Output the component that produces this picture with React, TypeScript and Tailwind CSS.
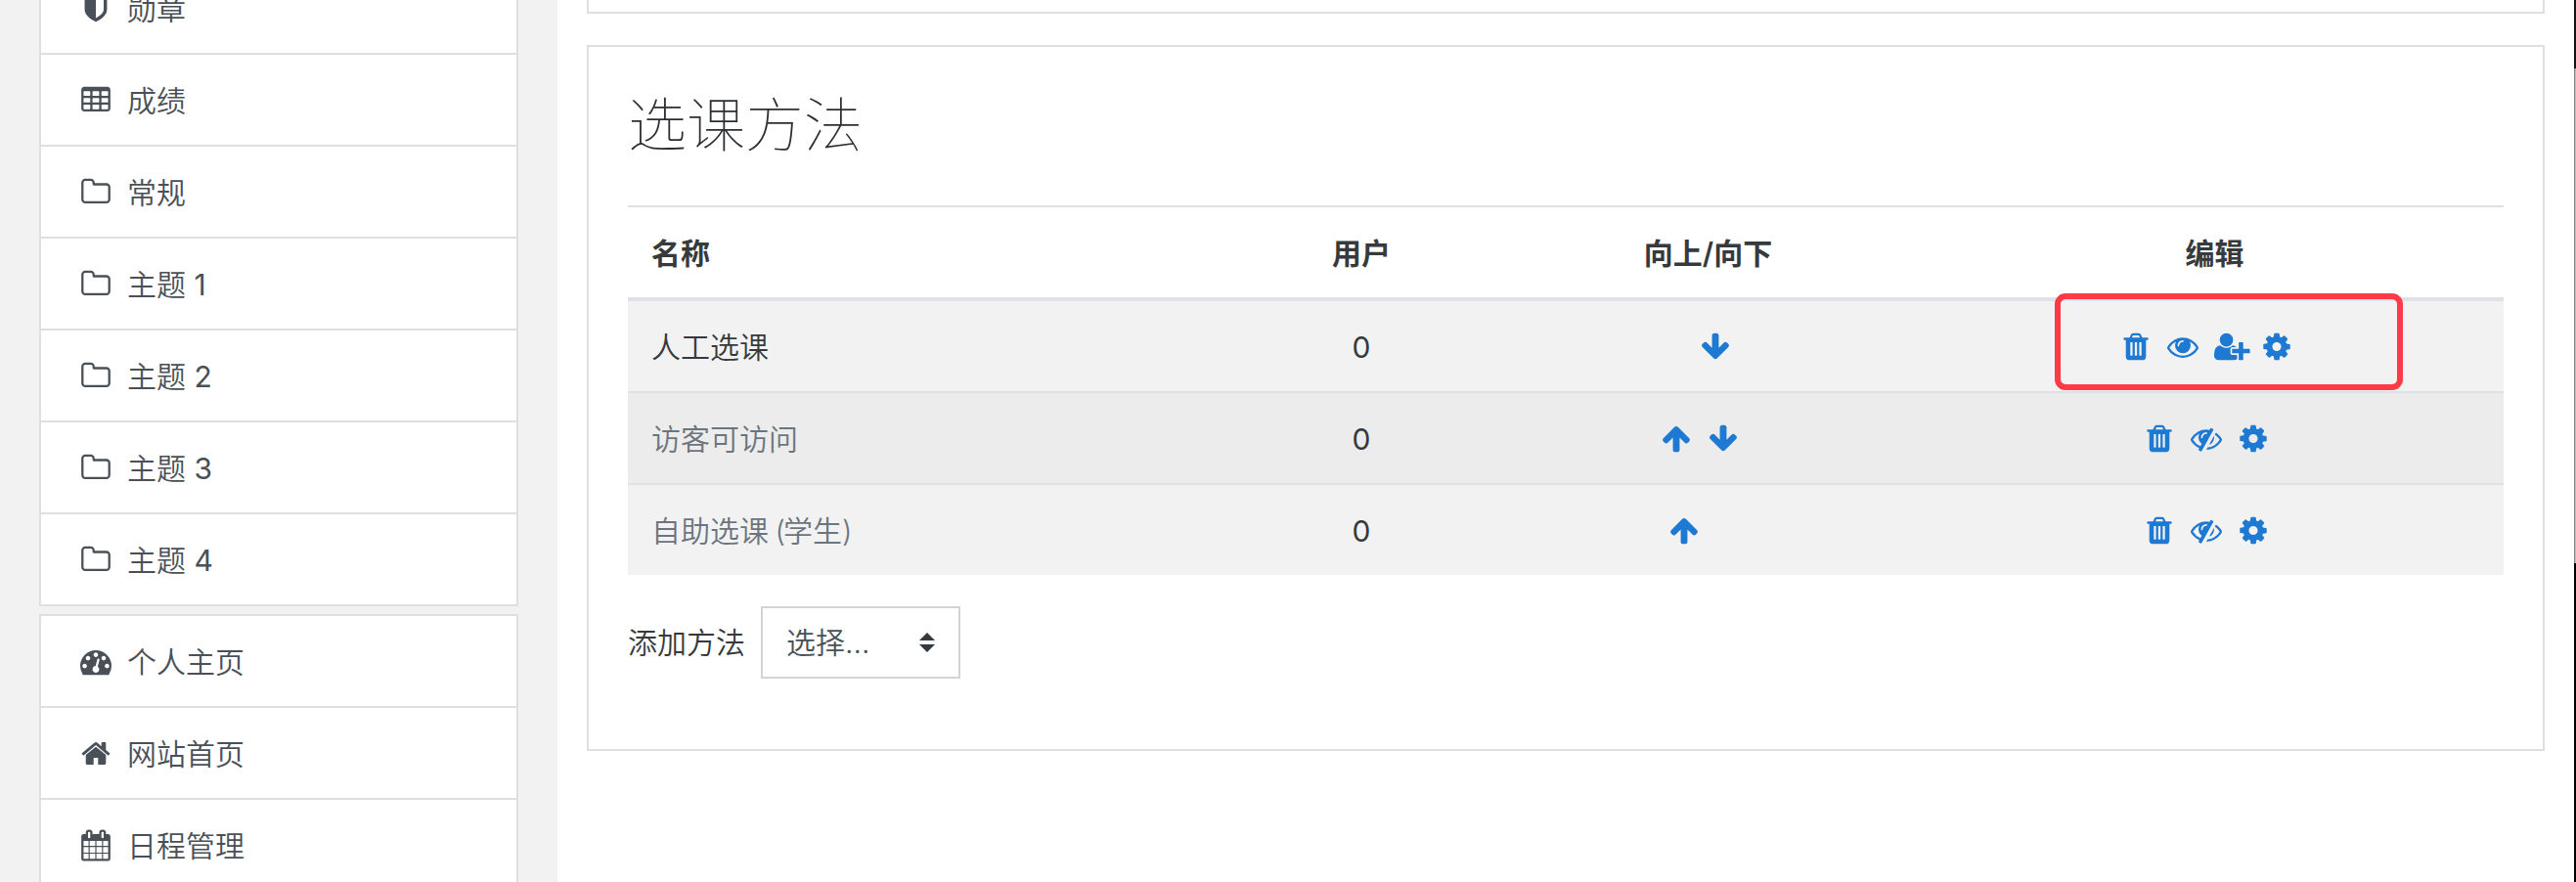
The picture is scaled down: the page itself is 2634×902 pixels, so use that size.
import type { ReactNode } from "react";

const SANS = "font-['Inter','Noto_Sans_CJK_SC',sans-serif]";

const paths = {
  shield:
    "M1344 960v-640h-448v1137q119-63 213-137 235-184 235-360zm192-768v768q0 86-33.5 170.5t-83 150-118 127.5-126.5 103-121 77.5-89.5 49.5-42.5 20q-12 6-26 6t-26-6q-16-7-42.5-20t-89.5-49.5-121-77.5-126.5-103-118-127.5-83-150-33.5-170.5v-768q0-26 19-45t45-19h1152q26 0 45 19t19 45z",
  table:
    "M576 1376v-192q0-14-9-23t-23-9h-320q-14 0-23 9t-9 23v192q0 14 9 23t23 9h320q14 0 23-9t9-23zm0-384v-192q0-14-9-23t-23-9h-320q-14 0-23 9t-9 23v192q0 14 9 23t23 9h320q14 0 23-9t9-23zm512 384v-192q0-14-9-23t-23-9h-320q-14 0-23 9t-9 23v192q0 14 9 23t23 9h320q14 0 23-9t9-23zm-512-768v-192q0-14-9-23t-23-9h-320q-14 0-23 9t-9 23v192q0 14 9 23t23 9h320q14 0 23-9t9-23zm512 384v-192q0-14-9-23t-23-9h-320q-14 0-23 9t-9 23v192q0 14 9 23t23 9h320q14 0 23-9t9-23zm512 384v-192q0-14-9-23t-23-9h-320q-14 0-23 9t-9 23v192q0 14 9 23t23 9h320q14 0 23-9t9-23zm-512-768v-192q0-14-9-23t-23-9h-320q-14 0-23 9t-9 23v192q0 14 9 23t23 9h320q14 0 23-9t9-23zm512 384v-192q0-14-9-23t-23-9h-320q-14 0-23 9t-9 23v192q0 14 9 23t23 9h320q14 0 23-9t9-23zm0-384v-192q0-14-9-23t-23-9h-320q-14 0-23 9t-9 23v192q0 14 9 23t23 9h320q14 0 23-9t9-23zm128-320v1088q0 66-47 113t-113 47h-1344q-66 0-113-47t-47-113v-1088q0-66 47-113t113-47h1344q66 0 113 47t47 113z",
  folder:
    "M1600 1312v-704q0-40-28-68t-68-28h-704q-40 0-68-28t-28-68v-64q0-40-28-68t-68-28h-320q-40 0-68 28t-28 68v960q0 40 28 68t68 28h1216q40 0 68-28t28-68zm128-704v704q0 92-66 158t-158 66h-1216q-92 0-158-66t-66-158v-960q0-92 66-158t158-66h320q92 0 158 66t66 158v32h672q92 0 158 66t66 158z",
  dashboard:
    "M384 1152q0-53-37.5-90.5t-90.5-37.5-90.5 37.5-37.5 90.5 37.5 90.5 90.5 37.5 90.5-37.5 37.5-90.5zm192-448q0-53-37.5-90.5t-90.5-37.5-90.5 37.5-37.5 90.5 37.5 90.5 90.5 37.5 90.5-37.5 37.5-90.5zm428 481l101-382q6-26-7.5-48.5t-38.5-29.5-48 6.5-30 39.5l-101 382q-60 5-107 43.5t-63 98.5q-20 77 20 146t117 89 146-20 89-117q16-60-6-117t-72-91zm660-33q0-53-37.5-90.5t-90.5-37.5-90.5 37.5-37.5 90.5 37.5 90.5 90.5 37.5 90.5-37.5 37.5-90.5zm-640-640q0-53-37.5-90.5t-90.5-37.5-90.5 37.5-37.5 90.5 37.5 90.5 90.5 37.5 90.5-37.5 37.5-90.5zm448 192q0-53-37.5-90.5t-90.5-37.5-90.5 37.5-37.5 90.5 37.5 90.5 90.5 37.5 90.5-37.5 37.5-90.5zm320 448q0 261-141 483-19 29-54 29h-1402q-35 0-54-29-141-221-141-483 0-182 71-348t191-286 286-191 348-71 348 71 286 191 191 286 71 348z",
  home:
    "M1472 992v480q0 26-19 45t-45 19h-384v-384h-256v384h-384q-26 0-45-19t-19-45v-480q0-1 .5-3t.5-3l575-474 575 474q1 2 1 6zm223-69l-62 74q-8 9-21 11h-3q-13 0-21-7l-692-577-692 577q-12 8-24 7-13-2-21-11l-62-74q-8-10-7-23.5t11-21.5l719-599q32-26 76-26t76 26l244 204v-195q0-14 9-23t23-9h192q14 0 23 9t9 23v408l219 182q10 8 11 21.5t-7 23.5z",
  calendar:
    "M192 1664h288v-288h-288v288zm352 0h320v-288h-320v288zm-352-352h288v-320h-288v320zm352 0h320v-320h-320v320zm-352-384h288v-288h-288v288zm736 736h320v-288h-320v288zm-384-736h320v-288h-320v288zm768 736h288v-288h-288v288zm-384-352h320v-320h-320v320zm-352-864v-288q0-13-9.5-22.5t-22.5-9.5h-64q-13 0-22.5 9.5t-9.5 22.5v288q0 13 9.5 22.5t22.5 9.5h64q13 0 22.5-9.5t9.5-22.5zm736 864h288v-320h-288v320zm-384-384h320v-288h-320v288zm384 0h288v-288h-288v288zm32-480v-288q0-13-9.5-22.5t-22.5-9.5h-64q-13 0-22.5 9.5t-9.5 22.5v288q0 13 9.5 22.5t22.5 9.5h64q13 0 22.5-9.5t9.5-22.5zm384-64v1280q0 52-38 90t-90 38h-1408q-52 0-90-38t-38-90v-1280q0-52 38-90t90-38h128v-96q0-66 47-113t113-47h64q66 0 113 47t47 113v96h384v-96q0-66 47-113t113-47h64q66 0 113 47t47 113v96h128q52 0 90 38t38 90z",
  down:
    "M1675 832q0 53-37 90l-651 652q-39 37-91 37-53 0-90-37l-651-652q-38-36-38-90 0-53 38-91l74-75q39-37 91-37 53 0 90 37l294 294v-704q0-52 38-90t90-38h128q52 0 90 38t38 90v704l294-294q37-37 90-37 52 0 91 37l75 75q37 39 37 91z",
  up:
    "M1675 971q0 51-37 90l-75 75q-38 38-91 38-54 0-90-38l-294-293v704q0 52-37.5 84.5t-90.5 32.5h-128q-53 0-90.5-32.5t-37.5-84.5v-704l-294 293q-36 38-90 38t-90-38l-75-75q-38-38-38-90 0-53 38-91l651-651q35-37 90-37 54 0 91 37l651 651q37 39 37 91z",
  trash:
    "M704 1376v-704q0-14-9-23t-23-9h-64q-14 0-23 9t-9 23v704q0 14 9 23t23 9h64q14 0 23-9t9-23zm256 0v-704q0-14-9-23t-23-9h-64q-14 0-23 9t-9 23v704q0 14 9 23t23 9h64q14 0 23-9t9-23zm256 0v-704q0-14-9-23t-23-9h-64q-14 0-23 9t-9 23v704q0 14 9 23t23 9h64q14 0 23-9t9-23zm-544-992h448l-48-117q-7-9-17-11h-317q-10 2-17 11zm928 32v64q0 14-9 23t-23 9h-96v948q0 83-47 143.5t-113 60.5h-832q-66 0-113-58.5t-47-141.5v-952h-96q-14 0-23-9t-9-23v-64q0-14 9-23t23-9h309l70-167q15-37 54-63t79-26h320q40 0 79 26t54 63l70 167h309q14 0 23 9t9 23z",
  eye:
    "M1664 960q-152-236-381-353 61 104 61 225 0 185-131.5 316.5t-316.5 131.5-316.5-131.5-131.5-316.5q0-121 61-225-229 117-381 353 133 205 333.5 326.5t434.5 121.5 434.5-121.5 333.5-326.5zm-720-384q0-20-14-34t-34-14q-125 0-214.5 89.5t-89.5 214.5q0 20 14 34t34 14 34-14 14-34q0-86 61-147t147-61q20 0 34-14t14-34zm848 384q0 34-20 69-140 230-376.5 368.5t-499.5 138.5-499.5-139-376.5-368q-20-35-20-69t20-69q140-229 376.5-368t499.5-139 499.5 139 376.5 368q20 35 20 69z",
  eyeSlash:
    "M555 1335l78-141q-87-63-136-159t-49-203q0-121 61-225-229 117-381 353 167 258 427 375zm389-759q0-20-14-34t-34-14q-125 0-214.5 89.5t-89.5 214.5q0 20 14 34t34 14 34-14 14-34q0-86 61-147t147-61q20 0 34-14t14-34zm363-191q0 7-1 9-106 189-316 567t-315 566l-49 89q-10 16-28 16-12 0-134-70-16-10-16-28 0-12 44-87-143-65-263.5-173t-208.5-245q-20-31-20-69t20-69q153-235 380-371t496-136q89 0 180 17l54-97q10-16 28-16 5 0 18 6t31 15.5 33 18.5 31.5 18.5 19.5 11.5q16 10 16 27zm37 447q0 139-79 253.5t-209 164.5l280-502q8 45 8 84zm448 128q0 35-20 69-39 64-109 145-150 172-347.5 267t-419.5 95l74-132q212-18 392.5-137t301.5-307q-115-179-282-294l63-112q95 64 182.5 153t144.5 184q20 34 20 69z",
  userPlus:
    "M704 896q-159 0-271.5-112.5t-112.5-271.5 112.5-271.5 271.5-112.5 271.5 112.5 112.5 271.5-112.5 271.5-271.5 112.5zm960 128h352q13 0 22.5 9.5t9.5 22.5v192q0 13-9.5 22.5t-22.5 9.5h-352v352q0 13-9.5 22.5t-22.5 9.5h-192q-13 0-22.5-9.5t-9.5-22.5v-352h-352q-13 0-22.5-9.5t-9.5-22.5v-192q0-13 9.5-22.5t22.5-9.5h352v-352q0-13 9.5-22.5t22.5-9.5h192q13 0 22.5 9.5t9.5 22.5v352zm-736 224q0 52 38 90t90 38h256v238q-68 50-171 50h-874q-121 0-194-69t-73-190q0-53 3.5-103.5t14-109 26.5-108.5 43-97.5 62-81 85.5-53.5 111.5-20q19 0 39 17 79 61 154.5 91.5t164.5 30.5 164.5-30.5 154.5-91.5q20-17 39-17 132 0 217 96h-223q-52 0-90 38t-38 90v192z",
  cog:
    "M1152 896q0-106-75-181t-181-75-181 75-75 181 75 181 181 75 181-75 75-181zm512-109v222q0 12-8 23t-20 13l-185 28q-19 54-39 91 35 50 107 138 10 12 10 25t-9 23q-27 37-99 108t-94 71q-12 0-26-9l-138-108q-44 23-91 38-16 136-29 186-7 28-36 28h-222q-14 0-24.5-8.5t-11.5-21.5l-28-184q-49-16-90-37l-141 107q-10 9-25 9-14 0-25-11-126-114-165-168-7-10-7-23 0-12 8-23 15-21 51-66.5t54-70.5q-27-50-41-99l-183-27q-13-2-21-12.5t-8-23.5v-222q0-12 8-23t19-13l186-28q14-46 39-92-40-57-107-138-10-12-10-24 0-10 9-23 26-36 98.5-107.5t94.5-71.5q13 0 26 10l138 107q44-23 91-38 16-136 29-186 7-28 36-28h222q14 0 24.5 8.5t11.5 21.5l28 184q49 16 90 37l142-107q9-9 24-9 13 0 25 10 129 119 165 170 7 8 7 22 0 12-8 23-15 21-51 66.5t-54 70.5q26 50 41 98l183 28q13 2 21 12.5t8 23.5z",
};

type IconName = keyof typeof paths;

function Icon({ name }: { name: IconName }) {
  return (
    <svg viewBox="0 0 1792 1792" className="size-8 shrink-0 overflow-visible fill-current">
      <path d={paths[name]} transform="translate(0 28)" />
    </svg>
  );
}

function NavGroup({ items }: { items: [IconName, string, number?][] }) {
  return (
    <ul className="border-2 border-b-0 border-[#dfdfdf] bg-white">
      {items.map(([icon, label, index]) => (
        <li
          key={`${label}${index ?? ""}`}
          className="flex h-[94px] items-center gap-4 border-b-2 border-[#dfdfdf] pl-10 text-[30px] text-[#495057]"
        >
          <Icon name={icon} />
          <span className="pt-0.5">
            {label}
            {index !== undefined && <span className="font-normal"> {index}</span>}
          </span>
        </li>
      ))}
    </ul>
  );
}

const GRID = "grid grid-cols-[618px_264px_445px_591px] items-center";

function Actions({ icons }: { icons: (IconName | null)[] }) {
  return (
    <div className="flex justify-center pr-px text-[#1d79d1]">
      {icons.map((icon, i) =>
        icon ? (
          <a key={i} className="mr-4 flex">
            <Icon name={icon} />
          </a>
        ) : (
          <span key={i} className="w-8" />
        ),
      )}
    </div>
  );
}

function Row({
  name,
  move,
  edit,
  className,
  children,
}: {
  name: ReactNode;
  move: (IconName | null)[];
  edit: IconName[];
  className: string;
  children?: ReactNode;
}) {
  return (
    <div className={`relative ${GRID} ${className}`}>
      <div className="pt-0.5 pl-6">{name}</div>
      <div className="pt-0.5 text-center font-normal text-[#373a3c]">0</div>
      <Actions icons={move} />
      <Actions icons={edit} />
      {children}
    </div>
  );
}

export default function App() {
  return (
    <div className={`flex h-[902px] w-[2634px] overflow-hidden bg-white leading-[45px] font-[350] ${SANS}`}>
      <aside className="h-full w-[570px] shrink-0 overflow-hidden bg-[#f2f2f2] pr-10 pl-10">
        <nav className="-mt-10 flex flex-col gap-2">
          <NavGroup
            items={[
              ["shield", "勋章"],
              ["table", "成绩"],
              ["folder", "常规"],
              ["folder", "主题", 1],
              ["folder", "主题", 2],
              ["folder", "主题", 3],
              ["folder", "主题", 4],
            ]}
          />
          <NavGroup
            items={[
              ["dashboard", "个人主页"],
              ["home", "网站首页"],
              ["calendar", "日程管理"],
            ]}
          />
        </nav>
      </aside>

      <main className="flex flex-1 flex-col gap-8 pr-[30px] pl-[30px]">
        <div className="h-[14px] shrink-0 border-2 border-t-0 border-[#dfdfdf]" />
        <section className="h-[722px] shrink-0 border-2 border-[#dfdfdf] px-10 pt-11 text-[30px] text-[#373a3c]">
          <h2 className="mb-[46px] h-[72px] text-[60px] leading-[72px] font-thin text-[#2b2f33]">选课方法</h2>

          <div>
            <div className={`h-[98px] border-t-2 border-b-4 border-[#dee2e6] font-semibold ${GRID}`}>
              <div className="pt-0.5 pl-6">名称</div>
              <div className="pt-0.5 text-center">用户</div>
              <div className="pt-0.5 text-center">向上/向下</div>
              <div className="pt-0.5 text-center">编辑</div>
            </div>
            <Row
              name="人工选课"
              move={[null, "down"]}
              edit={["trash", "eye", "userPlus", "cog"]}
              className="h-[92px] bg-[#f2f2f2]"
            >
              <div className="absolute -top-2 left-[1459px] h-[99px] w-[356px] rounded-[11px] border-6 border-[#ff3a47]" />
            </Row>
            <Row
              name="访客可访问"
              move={["up", "down"]}
              edit={["trash", "eyeSlash", "cog"]}
              className="h-[94px] border-t-2 border-[#dee2e6] bg-[#ececec] text-[#6c757d]"
            />
            <Row
              name={
                <>
                  自助选课<span className="tracking-[-2px]"> (</span>学生)
                </>
              }
              move={["up", null]}
              edit={["trash", "eyeSlash", "cog"]}
              className="h-[94px] border-t-2 border-[#dee2e6] bg-[#f2f2f2] text-[#6c757d]"
            />
          </div>

          <div className="mt-8 flex items-center">
            <span className="w-[136px] pt-px">添加方法</span>
            <button className="flex h-[74px] w-[204px] items-center justify-between border-2 border-[#ced4da] pr-6 pl-6 text-[#495057]">
              <span className="pt-px">选择...</span>
              <svg viewBox="0 0 16 20" className="h-5 w-4 fill-[#343a40]">
                <path d="M8 0l8 8H0zM8 20l8-8H0z" />
              </svg>
            </button>
          </div>
        </section>
      </main>

      <div className="flex w-[2px] shrink-0 flex-col">
        <div className="h-[70px] bg-[#141517]" />
        <div className="h-[506px] border-l border-[#858585] bg-[#bababa]" />
        <div className="flex-1 bg-black" />
      </div>
    </div>
  );
}
